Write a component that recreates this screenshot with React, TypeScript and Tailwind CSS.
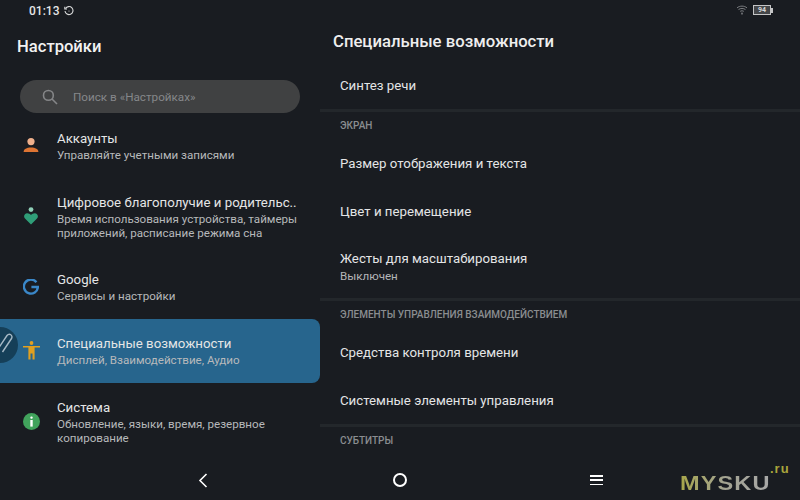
const font = { fontFamily: "Roboto, sans-serif" };

function AccountIcon() {
  return (
    <svg width="16" height="16" viewBox="0 0 16 16">
      <circle cx="8" cy="4.6" r="3.6" fill="#efb08c" />
      <path d="M0.6 15c0-3 3-4.6 7.4-4.6s7.4 1.6 7.4 4.6z" fill="#dd7433" />
    </svg>
  );
}

function WellbeingIcon() {
  return (
    <svg width="14" height="18" viewBox="0 0 14 18">
      <circle cx="7" cy="2.6" r="2.4" fill="#8fd0b8" />
      <path d="M7 17.5L1 11.6C-1 9.4 0.6 6.2 3.2 6.2c1.5 0 2.8.7 3.8 1.8 1-1.1 2.3-1.8 3.8-1.8 2.6 0 4.2 3.2 2.2 5.4z" fill="#2f9e78" />
    </svg>
  );
}

function GoogleIcon() {
  return (
    <svg width="16" height="16" viewBox="0 0 16 16" fill="none">
      <path d="M13.4 3.2A7 7 0 1 0 14.9 8H8.4" stroke="#3a87c8" strokeWidth="2.4" />
    </svg>
  );
}

function AccessIcon() {
  return (
    <svg width="17" height="19" viewBox="0 0 17 19">
      <circle cx="8.5" cy="2" r="1.9" fill="#e0a020" />
      <path d="M0 5h17v1.4h-5.4V18.6H9.5v-6H7.5v6H5.4V6.4H0z" fill="#e0a020" />
    </svg>
  );
}

function InfoIcon() {
  return (
    <svg width="17" height="17" viewBox="0 0 17 17">
      <circle cx="8.5" cy="8.5" r="8.5" fill="#41a35c" />
      <rect x="7.3" y="3.4" width="2.4" height="2.4" rx="1" fill="#ffffff" />
      <rect x="7.3" y="7" width="2.4" height="6.6" fill="#ffffff" />
    </svg>
  );
}

const rows = [
  { title: "Аккаунты", sub: "Управляйте учетными записями", icon: <AccountIcon />, h: "h-16" },
  { title: "Цифровое благополучие и родительс..", sub: "Время использования устройства, таймеры приложений, расписание режима сна", icon: <WellbeingIcon />, h: "h-[78px]" },
  { title: "Google", sub: "Сервисы и настройки", icon: <GoogleIcon />, h: "h-16 pb-[1px]" },
  { title: "Специальные возможности", sub: "Дисплей, Взаимодействие, Аудио", icon: <AccessIcon />, h: "h-16 pb-[2px]", active: true },
  { title: "Система", sub: "Обновление, языки, время, резервное копирование", icon: <InfoIcon />, h: "h-[76px]" },
];

function SectionLabel({ text }: { text: string }) {
  return <div className="h-[27px] pl-5 pt-[6px] text-[10px] leading-4 font-medium text-[#8a8d90]">{text}</div>;
}

function Item({ title, sub }: { title: string; sub?: string }) {
  return (
    <div className={`flex flex-col justify-center pl-5 text-[13.25px] leading-5 text-[#e4e5e6] ${sub ? "h-[63px] pb-[1px]" : "h-12 pt-[2px]"}`}>
      <div>{title}</div>
      {sub && <div className="text-[11.6px] leading-[14px] text-[#b4b6b8]">{sub}</div>}
    </div>
  );
}

function Divider() {
  return <div className="h-[3px] bg-[#23272b]" />;
}

export default function App() {
  return (
    <div style={font} className="relative w-[800px] h-[500px] overflow-hidden bg-[#191c21] text-white">
      <div className="flex h-[500px]">
        <div className="w-[320px] shrink-0">
          <div className="h-[21px] flex items-center gap-[5px] pl-[29px] text-[12px] font-medium text-[#e4e5e6]">
            <span>01:13</span>
            <svg width="10" height="10" viewBox="0 0 10 10" fill="none" stroke="#d8d9da" strokeWidth="1.1">
              <path d="M1.5 2.6A4 4 0 1 1 1 5" />
              <path d="M0.8 0.8v2.2H3" />
              <circle cx="5" cy="5" r="0.6" fill="#d8d9da" stroke="none" />
            </svg>
          </div>
          <div className="h-[59px] pl-[17px] pt-[14px] text-[16.6px] leading-6 font-medium text-[#f2f2f2]">Настройки</div>
          <div className="mx-5 h-[33px] rounded-full bg-[#404142] flex items-center pl-[22px]">
            <svg width="16" height="16" viewBox="0 0 16 16" fill="none" stroke="#858688" strokeWidth="1.6">
              <circle cx="6.4" cy="6.4" r="4.9" />
              <path d="M10 10l5 5" />
            </svg>
            <span className="ml-[15px] pt-[2px] text-[11.7px] text-[#85878a]">Поиск в «Настройках»</span>
          </div>
          <div>
            {rows.map((r) => (
              <div key={r.title} className={`${r.h} flex items-center rounded-r-lg ${r.active ? "bg-[#27658d]" : ""}`}>
                <div className="w-[57px] pl-[5px] flex justify-center shrink-0">{r.icon}</div>
                <div className="pr-4">
                  <div className="pt-[1px] text-[13.25px] leading-[18px] text-[#e4e5e6] whitespace-nowrap">{r.title}</div>
                  <div className="text-[11.6px] leading-[14px] text-[#b7b9bb]">{r.sub}</div>
                </div>
              </div>
            ))}
          </div>
        </div>
        <div className="flex-1">
          <div className="h-[61px] pl-[13px] pt-[30px] text-[16.7px] leading-6 font-medium text-[#eeeeee]">Специальные возможности</div>
          <Item title="Синтез речи" />
          <Divider />
          <SectionLabel text="ЭКРАН" />
          <Item title="Размер отображения и текста" />
          <Item title="Цвет и перемещение" />
          <Item title="Жесты для масштабирования" sub="Выключен" />
          <Divider />
          <SectionLabel text="ЭЛЕМЕНТЫ УПРАВЛЕНИЯ ВЗАИМОДЕЙСТВИЕМ" />
          <Item title="Средства контроля времени" />
          <Item title="Системные элементы управления" />
          <Divider />
          <SectionLabel text="СУБТИТРЫ" />
        </div>
      </div>

      {/* статус справа */}
      <div className="absolute top-[5px] right-[27px] flex items-center gap-[5px]">
        <svg width="12" height="10" viewBox="0 0 12 11" fill="none" stroke="#85878a" strokeWidth="1">
          <path d="M0.5 3.2C3.4 0.6 8.6 0.6 11.5 3.2" />
          <path d="M2.2 5C4.2 3.4 7.8 3.4 9.8 5" />
          <path d="M4 7C5 6.2 7 6.2 8 7" />
          <rect x="5.2" y="8.4" width="1.6" height="2" fill="#85878a" stroke="none" />
        </svg>
        <div className="flex items-center">
          <div className="w-[18px] h-[10px] border border-[#c4c5c6] bg-[#45474a] text-[7px] leading-[8px] text-center font-bold text-[#d8d9da]">94</div>
          <div className="w-[2px] h-[5px] bg-[#c4c5c6]" />
        </div>
      </div>

      {/* плавающая кнопка */}
      <div className="absolute left-[-18px] top-[327px] w-9 h-9 rounded-full bg-[#153f58] overflow-hidden">
        <svg className="absolute left-[18px] top-[5px]" width="14" height="26" viewBox="0 0 14 26" fill="none" stroke="#a5b8c5" strokeWidth="1.4">
          <path d="M-2 17L7 3.5A2.7 2.7 0 0 1 11.5 6.5L2.5 20" />
        </svg>
      </div>

      {/* навигация */}
      <div className="absolute left-0 right-0 bottom-0 h-10 flex items-center">
        <div className="absolute left-[198px] top-[13px]">
          <svg width="10" height="15" viewBox="0 0 10 15" fill="none" stroke="#ffffff" strokeWidth="1.6">
            <path d="M8.5 1L2 7.5l6.5 6.5" />
          </svg>
        </div>
        <div className="absolute left-[393px] top-[13px] w-[14px] h-[14px] rounded-full border-2 border-white" />
        <div className="absolute left-[590px] top-[15px] w-[13px] h-[10px] flex flex-col justify-between">
          <div className="h-[1.5px] bg-white" />
          <div className="h-[1.5px] bg-white" />
          <div className="h-[1.5px] bg-white" />
        </div>
      </div>

      {/* водяной знак */}
      <div className="absolute left-[680px] top-[471px] origin-left scale-x-[1.12] text-[21px] leading-6 font-bold tracking-[1px] text-transparent bg-clip-text bg-gradient-to-r from-[#a8a648] via-[#a3a392] to-[#a8a8a8]" style={{ fontFamily: "Liberation Sans, sans-serif" }}>
        MYSKU
      </div>
      <div className="absolute left-[770px] top-[461px] text-[13px] leading-4 font-bold tracking-[1px] text-[#a9a53c]" style={{ fontFamily: "Liberation Sans, sans-serif" }}>
        .ru
      </div>
    </div>
  );
}
